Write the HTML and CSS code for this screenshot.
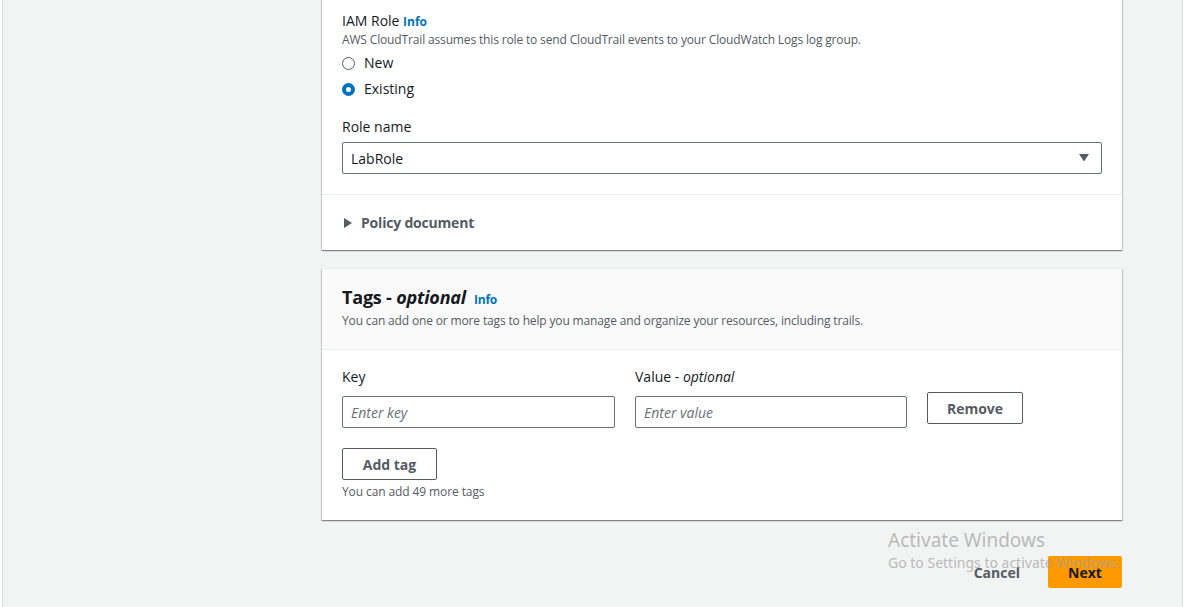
FILE: index.html
```html
<!DOCTYPE html>
<html lang="en">
<head>
<meta charset="utf-8">
<title>CloudTrail - Create trail</title>
<link rel="stylesheet" href="styles.css">
</head>
<body>
<div class="frame">
  <main class="content">
    <section class="card card-top">
      <div class="card-body">
        <div class="field-label">IAM Role <a class="info" href="#">Info</a></div>
        <div class="field-desc">AWS CloudTrail assumes this role to send CloudTrail events to your CloudWatch Logs log group.</div>
        <div class="radio-group">
          <label class="radio"><span class="radio-dot"></span><span>New</span></label>
          <label class="radio"><span class="radio-dot checked"></span><span>Existing</span></label>
        </div>
        <div class="field-label role-label">Role name</div>
        <div class="select">
          <span>LabRole</span>
          <svg class="caret" width="10" height="8" viewBox="0 0 10 8"><path d="M0 0h10L5 7.5z" fill="#545b64"/></svg>
        </div>
      </div>
      <div class="expander">
        <svg width="8" height="10" viewBox="0 0 8 10"><path d="M0 0l8 5-8 5z" fill="#545b64"/></svg>
        <span>Policy document</span>
      </div>
    </section>

    <section class="card">
      <header class="card-header">
        <h2 class="card-title"><span>Tags - <em>optional</em></span><a class="info" href="#">Info</a></h2>
        <div class="field-desc">You can add one or more tags to help you manage and organize your resources, including trails.</div>
      </header>
      <div class="card-body tags-body">
        <div class="tag-row">
          <div class="tag-col key-col">
            <div class="field-label">Key</div>
            <div class="input placeholder">Enter key</div>
          </div>
          <div class="tag-col">
            <div class="field-label">Value - <em>optional</em></div>
            <div class="input placeholder">Enter value</div>
          </div>
          <button class="btn remove">Remove</button>
        </div>
        <button class="btn add">Add tag</button>
        <div class="hint">You can add 49 more tags</div>
      </div>
    </section>

    <div class="actions">
      <button class="btn-link">Cancel</button>
      <button class="btn-primary">Next</button>
    </div>
  </main>
  <div class="watermark">
    <div class="wm-title">Activate Windows</div>
    <div class="wm-sub">Go to Settings to activate Windows.</div>
  </div>
</div>
</body>
</html>
```

FILE: styles.css
```css
* { box-sizing: border-box; }

html, body {
  margin: 0;
  padding: 0;
  background: #ffffff;
  font-family: "Open Sans", "Noto Sans", Arial, sans-serif;
  color: #16191f;
}

.frame {
  position: relative;
  margin-left: 2px;
  width: 1181px;
  height: 607px;
  overflow: hidden;
  background: #f2f3f3;
  border-left: 1px solid #d5dbdb;
  border-right: 1px solid #d5dbdb;
}

.content {
  padding-left: 319px;
  width: 1120px;
}

.card {
  width: 800px;
  background: #ffffff;
  border-top: 1px solid #eaeded;
  box-shadow: 0 1px 1px 0 rgba(0, 28, 36, 0.3), 1px 1px 1px 0 rgba(0, 28, 36, 0.15), -1px 1px 1px 0 rgba(0, 28, 36, 0.15);
}

.card-top {
  margin-top: -1px;
}

.card-top .card-body {
  padding: 10px 20px 20px;
}

.field-label {
  font-size: 14px;
  line-height: 22px;
  color: #16191f;
}

.info {
  font-size: 12px;
  font-weight: 700;
  color: #0073bb;
  text-decoration: none;
  line-height: 16px;
}

.field-desc {
  font-size: 12px;
  line-height: 16px;
  color: #545b64;
  letter-spacing: -0.15px;
}

.radio-group {
  display: flex;
  flex-direction: column;
  gap: 6px;
  margin-top: 5px;
}

.radio {
  display: flex;
  align-items: center;
  gap: 9px;
  font-size: 14px;
  line-height: 20px;
  color: #16191f;
}

.radio-dot {
  width: 13px;
  height: 13px;
  border-radius: 50%;
  border: 1px solid #545b64;
  background: #ffffff;
}

.radio-dot.checked {
  border: 4px solid #0073bb;
}

.role-label {
  margin-top: 17px;
}

.select {
  display: flex;
  align-items: center;
  justify-content: space-between;
  margin-top: 4px;
  height: 32px;
  padding: 0 12px 0 8px;
  border: 1px solid #687078;
  border-radius: 2px;
  font-size: 14px;
  color: #16191f;
}

.expander {
  display: flex;
  align-items: center;
  gap: 9px;
  padding: 17px 22px 16px;
  border-top: 1px solid #eaeded;
  font-size: 14px;
  line-height: 22px;
  font-weight: 700;
  color: #545b64;
  letter-spacing: -0.2px;
}

.card + .card {
  margin-top: 18px;
}

.card-header {
  background: #fafafa;
  padding: 16px 20px 20px;
  border-bottom: 1px solid #eaeded;
}

.card-title {
  display: flex;
  align-items: baseline;
  gap: 8px;
  height: 24px;
  margin: 0 0 4px;
  font-size: 18px;
  line-height: 24px;
  font-weight: 700;
  color: #16191f;
  letter-spacing: -0.2px;
}

.tags-body {
  padding: 16px 20px 20px;
}

.tag-row {
  display: flex;
  align-items: flex-end;
  gap: 20px;
}

.tag-col {
  display: flex;
  flex-direction: column;
  gap: 8px;
  width: 272px;
}

.key-col {
  width: 273px;
}

.input {
  height: 32px;
  border: 1px solid #687078;
  border-radius: 2px;
  padding: 0 8px;
  display: flex;
  align-items: center;
  font-size: 14px;
}

.placeholder {
  color: #687078;
  font-style: italic;
}

.btn {
  height: 32px;
  background: #ffffff;
  border: 1px solid #545b64;
  border-radius: 2px;
  font-family: inherit;
  font-size: 14px;
  font-weight: 700;
  color: #545b64;
  padding: 0;
  white-space: nowrap;
}

.remove {
  width: 96px;
  margin-bottom: 4px;
}

.add {
  display: block;
  margin-top: 20px;
  width: 95px;
}

.hint {
  margin-top: 4px;
  font-size: 12px;
  line-height: 16px;
  color: #545b64;
  letter-spacing: -0.1px;
}

.actions {
  display: flex;
  justify-content: flex-end;
  align-items: center;
  gap: 8px;
  width: 800px;
  margin-top: 36px;
}

.btn-link {
  height: 32px;
  padding: 0 20px;
  background: transparent;
  border: none;
  font-family: inherit;
  font-size: 14px;
  font-weight: 700;
  color: #545b64;
}

.btn-primary {
  height: 32px;
  width: 74px;
  background: #ff9900;
  border: 1px solid #ff9900;
  border-radius: 2px;
  font-family: inherit;
  font-size: 14px;
  font-weight: 700;
  color: #16191f;
}

.watermark {
  position: absolute;
  left: 885px;
  top: 527px;
  color: rgba(160, 160, 160, 0.7);
  font-family: "Noto Sans", "Open Sans", sans-serif;
  pointer-events: none;
}

.wm-title {
  font-size: 19px;
  line-height: 26px;
}

.wm-sub {
  font-size: 14px;
  line-height: 20px;
}
```
